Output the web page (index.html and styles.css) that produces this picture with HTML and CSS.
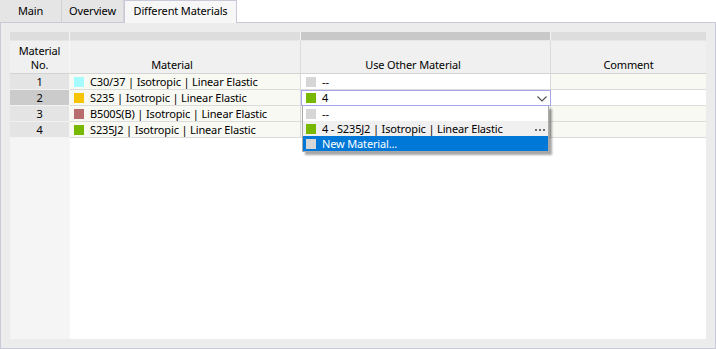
FILE: index.html
```html
<!DOCTYPE html>
<html>
<head>
<meta charset="utf-8">
<link rel="stylesheet" href="styles.css">
</head>
<body>
<div class="window">
  <div class="tabs">
    <div class="tab t-main">Main</div>
    <div class="tab t-over">Overview</div>
    <div class="tab t-diff active">Different Materials</div>
  </div>
  <div class="panel">
    <div class="grid">
      <div class="row band">
        <div class="c"></div><div class="c"></div><div class="c dark"></div><div class="c"></div>
      </div>
      <div class="row head">
        <div class="c h1">Material<br>No.</div>
        <div class="c h2">Material</div>
        <div class="c h3">Use Other Material</div>
        <div class="c h4">Comment</div>
      </div>
      <div class="row data">
        <div class="c no">1</div>
        <div class="c mat"><span class="sw cyan"></span>C30/37 | Isotropic | Linear Elastic</div>
        <div class="c other white"><span class="sw grey"></span>--</div>
        <div class="c com"></div>
      </div>
      <div class="row data">
        <div class="c no sel">2</div>
        <div class="c mat"><span class="sw amber"></span>S235 | Isotropic | Linear Elastic</div>
        <div class="c other combo"><span class="sw green"></span>4
          <svg class="chev" width="10" height="6" viewBox="0 0 10 6"><polyline points="0.5,0.5 5,5 9.5,0.5" fill="none" stroke="#505050" stroke-width="1.1"/></svg>
        </div>
        <div class="c com white"></div>
      </div>
      <div class="row data">
        <div class="c no">3</div>
        <div class="c mat"><span class="sw rose"></span>B500S(B) | Isotropic | Linear Elastic</div>
        <div class="c other"></div>
        <div class="c com"></div>
      </div>
      <div class="row data">
        <div class="c no">4</div>
        <div class="c mat"><span class="sw green"></span>S235J2 | Isotropic | Linear Elastic</div>
        <div class="c other"></div>
        <div class="c com"></div>
      </div>
      <div class="row filler">
        <div class="c f1"></div><div class="c f2"></div>
      </div>
    </div>
    <div class="dropdown">
      <div class="item i1"><span class="sw grey"></span>--</div>
      <div class="item i2"><span class="sw green"></span>4 - S235J2 | Isotropic | Linear Elastic
        <svg class="dots" width="11" height="3" viewBox="0 0 11 3"><rect x="0" y="0" width="2" height="2" fill="#6e6e6e"/><rect x="4" y="0" width="2" height="2" fill="#6e6e6e"/><rect x="8" y="0" width="2" height="2" fill="#6e6e6e"/></svg>
      </div>
      <div class="item i3"><span class="sw grey"></span>New Material...</div>
    </div>
  </div>
</div>
</body>
</html>
```

FILE: styles.css
```css
* { box-sizing: border-box; }
html, body { margin: 0; padding: 0; background: #ffffff; }
body {
  font-family: "Noto Sans", "Open Sans", "DejaVu Sans", sans-serif;
  font-size: 11px;
  letter-spacing: -0.15px;
  color: #000000;
}
.window { width: 716px; height: 349px; display: flex; flex-direction: column; }

.tabs { display: flex; height: 22px; position: relative; z-index: 2; }
.tab {
  height: 22px;
  line-height: 21px;
  text-align: center;
  background: #e5e5e5;
  border-right: 1px solid #d3d3d3;
}
.t-main { width: 62px; }
.t-over { width: 62px; }
.t-diff { width: 113px; }
.tab.active {
  height: 23px;
  background: #f7f7f7;
  border: 1px solid #c9c9d9;
  border-bottom: none;
  line-height: 20px;
}

.panel {
  position: relative;
  height: 327px;
  background: #ececec;
  border: 1px solid #c9c9d9;
  padding: 9px;
}

.grid { height: 307px; display: flex; flex-direction: column; background: #ffffff; }
.row { display: grid; grid-template-columns: 60px 231px 250px 155px; }
.c { border-right: 1px solid #dadada; }
.c:last-child { border-right: none; }

.band { height: 9px; }
.band .c { background: #dddddd; border-right: 1px solid #f4f4f4; border-bottom: 1px solid #e6e6e6; }
.band .c.dark { background: #c8c8c8; }
.band .c:last-child { border-right: none; }

.head { height: 33px; }
.head .c {
  background: #f0f0f0;
  border-bottom: 1px solid #d3d3d3;
  border-right: 1px solid #dcdcdc;
  display: flex;
  align-items: flex-end;
  justify-content: center;
  text-align: center;
  line-height: 13.5px;
  padding-bottom: 2px;
}
.head .c:last-child { border-right: none; }
.head .h1 { border-right: 1px solid #f8f8f8; }
.head .h2 { padding-right: 26px; }
.head .h3 { padding-right: 25px; }

.data { height: 16px; }
.data .c {
  border-bottom: 1px solid #dcdcdc;
  line-height: 15px;
  white-space: nowrap;
  display: flex;
  align-items: center;
  background: #f9f9f3;
}
.data .no { justify-content: center; background: #e4e4e4; border-bottom: 1px solid #f2f2f2; border-right: 1px solid #f6f6f6; }
.data .no.sel { background: #cbcbcb; }
.data .mat { padding-left: 4px; }
.data .other { padding-left: 5px; }
.data .white { background: #ffffff; }
.data .combo { background: #ffffff; outline: 1px solid #a6a6e6; outline-offset: -1px; position: relative; }
.chev { position: absolute; left: 236px; top: 6px; }

.sw { display: inline-block; width: 10px; height: 10px; margin-right: 6px; flex: none; }
.cyan { background: #a6fbff; }
.amber { background: #f6c400; }
.rose { background: #b86e6e; }
.green { background: #78b800; }
.grey { background: #d6d6d6; }

.filler { flex: 1; }
.filler .c { border: none; }
.f1 { background: #f5f5f5; }
.f2 { background: #ffffff; grid-column: 2 / 5; }

.dropdown {
  position: absolute;
  left: 301px;
  top: 83px;
  width: 247px;
  height: 46px;
  background: #ffffff;
  border: 1px solid #a9a9a9;
  border-top: none;
  box-shadow: 3px 3px 2px rgba(0, 0, 0, 0.35);
  display: flex;
  flex-direction: column;
}
.item {
  display: flex;
  align-items: center;
  padding-left: 3px;
  white-space: nowrap;
  position: relative;
}
.i1 { height: 15px; }
.i2 { height: 15px; background: #f0f0f0; }
.i3 { height: 15px; background: #0078d7; color: #ffffff; }
.dots { position: absolute; left: 232px; top: 8px; }
```
